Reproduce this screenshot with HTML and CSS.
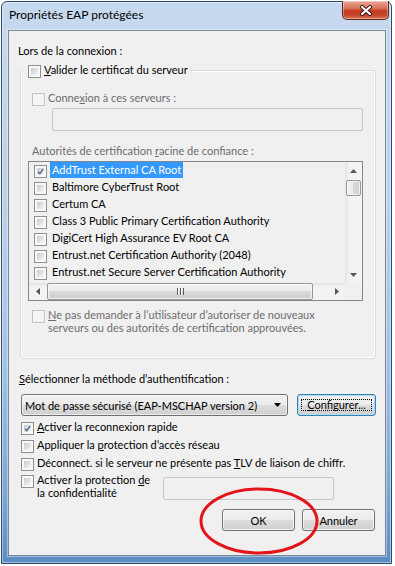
FILE: index.html
```html
<!DOCTYPE html>
<html lang="fr">

<head>
    <meta charset="UTF-8">
    <meta name="viewport" content="width=device-width, initial-scale=1.0">
    <title>Propriétés EAP protégées</title>
    <link rel="stylesheet" href="styles.css">
</head>

<body>
    <div class="window">
        <div class="titlebar">
            <span class="title">Propriétés EAP protégées</span>
            <button class="close" aria-label="Fermer">
                <svg width="14" height="11" viewBox="0 0 14 11">
                    <path d="M3 2 L11 9 M11 2 L3 9" stroke="#3a1610" stroke-width="4" stroke-linecap="round" />
                    <path d="M3 2 L11 9 M11 2 L3 9" stroke="#ffffff" stroke-width="2.2" stroke-linecap="round" />
                </svg>
            </button>
        </div>

        <div class="client">
            <div class="heading">Lors de la connexion :</div>

            <fieldset class="group">
                <legend>
                    <label class="check"><span class="cb"></span><span><span class="key">V</span>alider le certificat du serveur</span></label>
                </legend>

                <label class="check sub disabled"><span class="cb"></span><span>Conne<span class="key">x</span>ion à ces serveurs :</span></label>
                <div class="field disabled servers"></div>

                <div class="caption">Autorités de certification <span class="key">r</span>acine de confiance :</div>

                <div class="listbox">
                    <div class="list-body">
                        <ul class="cert-list">
                            <li>
                                <span class="cb checked">
                                    <svg width="9" height="9" viewBox="0 0 9 9"><path d="M1.2 4.6 L3.6 7.2 L7.9 1.4" fill="none" stroke="#4a5b87" stroke-width="1.7" /></svg>
                                </span>
                                <span class="name selected">AddTrust External CA Root</span>
                            </li>
                            <li><span class="cb"></span><span class="name">Baltimore CyberTrust Root</span></li>
                            <li><span class="cb"></span><span class="name">Certum CA</span></li>
                            <li><span class="cb"></span><span class="name">Class 3 Public Primary Certification Authority</span></li>
                            <li><span class="cb"></span><span class="name">DigiCert High Assurance EV Root CA</span></li>
                            <li><span class="cb"></span><span class="name">Entrust.net Certification Authority (2048)</span></li>
                            <li><span class="cb"></span><span class="name">Entrust.net Secure Server Certification Authority</span></li>
                        </ul>
                        <div class="vscroll">
                            <span class="arrow"><svg width="7" height="4" viewBox="0 0 7 4"><path d="M0 4H7L3.5 0Z" fill="#555" /></svg></span>
                            <span class="vthumb"></span>
                            <span class="track"></span>
                            <span class="arrow"><svg width="7" height="4" viewBox="0 0 7 4"><path d="M0 0H7L3.5 4Z" fill="#555" /></svg></span>
                        </div>
                    </div>
                    <div class="hbar-row">
                        <div class="hscroll">
                            <span class="arrow"><svg width="4" height="7" viewBox="0 0 4 7"><path d="M4 0V7L0 3.5Z" fill="#555" /></svg></span>
                            <span class="hthumb"><span class="grip"></span></span>
                            <span class="track"></span>
                            <span class="arrow"><svg width="4" height="7" viewBox="0 0 4 7"><path d="M0 0V7L4 3.5Z" fill="#555" /></svg></span>
                        </div>
                        <div class="corner"></div>
                    </div>
                </div>

                <label class="check sub multi disabled"><span class="cb"></span><span><span class="key">N</span>e pas demander à l’utilisateur d’autoriser de nouveaux<br>serveurs ou des autorités de certification approuvées.</span></label>
            </fieldset>

            <div class="heading method"><span class="key">S</span>électionner la méthode d’authentification :</div>

            <div class="auth-row">
                <div class="combo">
                    <span>Mot de passe sécurisé (EAP-MSCHAP version 2)</span>
                    <svg width="7" height="4" viewBox="0 0 7 4"><path d="M0 0H7L3.5 4Z" fill="#000" /></svg>
                </div>
                <button class="btn focused"><span class="focus-rect"><span class="key">C</span>onfigurer...</span></button>
            </div>

            <div class="options">
                <label class="check">
                    <span class="cb checked">
                        <svg width="9" height="9" viewBox="0 0 9 9"><path d="M1.2 4.6 L3.6 7.2 L7.9 1.4" fill="none" stroke="#4a5b87" stroke-width="1.7" /></svg>
                    </span>
                    <span><span class="key">A</span>ctiver la reconnexion rapide</span>
                </label>
                <label class="check"><span class="cb"></span><span>Appliquer la <span class="key">p</span>rotection d’accès réseau</span></label>
                <label class="check"><span class="cb"></span><span>Déconnect. si le serveur ne présente pas <span class="key">T</span>LV de liaison de chiffr.</span></label>
                <div class="privacy">
                    <label class="check multi"><span class="cb"></span><span>Activer la protection <span class="key">d</span>e<br>la confidentialité</span></label>
                    <div class="field disabled identity"></div>
                </div>
            </div>

            <div class="actions">
                <button class="btn">OK</button>
                <button class="btn">Annuler</button>
            </div>
        </div>
    </div>

    <!-- red circle drawn over the OK button -->
    <svg class="mark" width="124" height="72" viewBox="0 0 124 72">
        <ellipse cx="62" cy="36" rx="58" ry="32" fill="none" stroke="#e3151a" stroke-width="3" />
    </svg>
</body>

</html>
```

FILE: styles.css
```css
* {
    box-sizing: border-box;
}

body {
    margin: 0;
    background-color: #ffffff;
    font-family: Lato, "Liberation Sans", sans-serif;
    font-size: 11px;
    line-height: 15px;
    color: #000;
}

.window {
    width: 391px;
    height: 563px;
    margin: 1px 0 0 1px;
    border: 1px solid #2d4a6b;
    border-radius: 6px 6px 0 0;
    background: linear-gradient(to bottom, #c6d9ee 0%, #bcd2ea 35%, #a2c2e4 65%, #79a6d4 88%, #5b8ec4 100%);
    box-shadow: inset 0 0 0 1px rgba(255, 255, 255, 0.45);
}

.titlebar {
    display: flex;
    justify-content: space-between;
    align-items: flex-start;
    height: 28px;
    padding-left: 7px;
}

.title {
    padding-top: 5px;
    font-size: 12px;
}

.close {
    display: flex;
    align-items: center;
    justify-content: center;
    width: 47px;
    height: 19px;
    margin: -1px 2px 0 0;
    padding: 0;
    border: 1px solid #5e2a20;
    border-top: none;
    border-radius: 0 0 5px 5px;
    background: linear-gradient(to bottom, #eaa999 0%, #d9735c 40%, #c43b22 55%, #c4432a 78%, #de7a55 100%);
    box-shadow: inset 0 0 0 1px rgba(255, 255, 255, 0.35);
}

.client {
    height: 526px;
    margin: 0 5px 0 6px;
    padding: 12px 9px 0;
    border: 1px solid #7a8797;
    background-color: #f0f0f0;
    box-shadow: 0 0 0 1px rgba(255, 255, 255, 0.4);
}

.key {
    text-decoration: underline;
    text-underline-offset: 1px;
}

/* checkboxes */

.check {
    display: flex;
    align-items: flex-start;
    gap: 3px;
    white-space: nowrap;
}

.cb {
    display: flex;
    align-items: center;
    justify-content: center;
    flex: none;
    width: 13px;
    height: 13px;
    margin-top: 3px;
    padding: 2px;
    border: 1px solid #8e8f8f;
    background: linear-gradient(135deg, #c6cad0, #f6f6f6) content-box, #f8f8f8;
}

.check.disabled {
    color: #6d6d6d;
}

.check.disabled .cb {
    border-color: #c3c3c3;
    background: #f4f4f4;
}

.check.multi {
    line-height: 13px;
}

.check.multi .cb {
    margin-top: 2px;
}

/* group box */

.group {
    min-width: 0;
    margin: 4px 0 0 2px;
    padding: 12px 12px 24px 7px;
    border: 1px solid #d5dfe5;
    border-radius: 3px;
    box-shadow: inset 0 0 0 1px #ffffff;
}

.group legend {
    margin-left: -2px;
    padding: 0 2px;
    background-color: #f0f0f0;
}

.check.sub {
    margin-left: 4px;
}

.field {
    height: 23px;
    border: 1px solid #c3c6ca;
    border-radius: 2px;
}

.field.servers {
    margin: 2px 0 0 24px;
}

.caption {
    margin: 12px 0 0 4px;
    color: #6d6d6d;
}

/* certificate list */

.listbox {
    display: flex;
    flex-direction: column;
    height: 140px;
    margin-top: 3px;
    border: 1px solid #828790;
}

.list-body {
    display: flex;
    flex: 1;
}

.cert-list {
    flex: 1;
    margin: 0;
    padding: 0 0 0 5px;
    list-style: none;
    overflow: hidden;
}

.cert-list li {
    display: flex;
    align-items: flex-start;
    gap: 3px;
    height: 17px;
    line-height: 16px;
    white-space: nowrap;
}

.cert-list .name {
    padding: 0 2px;
}

.cert-list .selected {
    background-color: #3399ff;
    color: #ffffff;
}

.vscroll {
    display: flex;
    flex-direction: column;
    width: 17px;
    background: linear-gradient(to right, #e4e4e4, #f3f3f3 25%, #f3f3f3);
}

.hscroll {
    display: flex;
    flex: 1;
    background: linear-gradient(to bottom, #e4e4e4, #f3f3f3 25%, #f3f3f3);
}

.arrow {
    display: flex;
    align-items: center;
    justify-content: center;
    flex: none;
    width: 17px;
    height: 17px;
}

.track {
    flex: 1;
}

.vthumb {
    height: 16px;
    margin: 1px 1px 0;
    border: 1px solid #979797;
    border-radius: 2px;
    background: linear-gradient(to right, #f4f4f4, #e9e9e9 50%, #dadada 50%, #cfcfcf);
    box-shadow: inset 0 0 0 1px rgba(255, 255, 255, 0.7);
}

.hthumb {
    display: flex;
    align-items: center;
    justify-content: center;
    width: 266px;
    margin: 0 0 0 1px;
    border: 1px solid #979797;
    border-radius: 2px;
    background: linear-gradient(to bottom, #f4f4f4, #e9e9e9 50%, #dadada 50%, #cfcfcf);
    box-shadow: inset 0 0 0 1px rgba(255, 255, 255, 0.7);
}

.grip {
    width: 7px;
    height: 7px;
    background: linear-gradient(to right, #5a5a5a 1px, #ffffff 1px, #ffffff 2px, transparent 2px) 0 0 / 3px 100% repeat-x;
}

.hbar-row {
    display: flex;
    height: 17px;
}

.corner {
    width: 17px;
    background-color: #f0f0f0;
}

.check.sub.multi {
    margin-top: 7px;
}

/* authentication method */

.heading.method {
    margin: 12px 0 0 1px;
}

.auth-row {
    display: flex;
    gap: 9px;
    margin-top: 8px;
    padding-left: 3px;
}

.combo {
    display: flex;
    align-items: center;
    justify-content: space-between;
    width: 267px;
    height: 22px;
    padding: 0 6px 0 3px;
    border: 1px solid #707070;
    border-radius: 3px;
    background: linear-gradient(to bottom, #f2f2f2, #ebebeb 50%, #dddddd 50%, #cfcfcf);
    box-shadow: inset 0 0 0 1px rgba(255, 255, 255, 0.6);
    white-space: nowrap;
}

.btn {
    width: 73px;
    height: 22px;
    padding: 0;
    border: 1px solid #707070;
    border-radius: 3px;
    background: linear-gradient(to bottom, #f2f2f2, #ebebeb 50%, #dddddd 50%, #cfcfcf);
    box-shadow: inset 0 0 0 1px rgba(255, 255, 255, 0.7);
    font: inherit;
    color: #000;
}

.btn.focused {
    width: 79px;
    padding: 4px 3px;
    border-color: #3c7fb1;
    box-shadow: inset 0 0 0 1px #a9dcf6;
}

.focus-rect {
    display: block;
    height: 12px;
    border: 1px dotted #000;
    line-height: 10px;
}

.options {
    display: flex;
    flex-direction: column;
    gap: 2px;
    margin-top: 3px;
    padding-left: 3px;
}

.privacy {
    display: flex;
}

.privacy .check {
    width: 142px;
}

.field.identity {
    width: 171px;
    margin: 4px 0 0 0;
}

.actions {
    display: flex;
    justify-content: flex-end;
    gap: 7px;
    margin: 9px 1px 0 0;
}

.mark {
    position: absolute;
    left: 197px;
    top: 485px;
}
```
